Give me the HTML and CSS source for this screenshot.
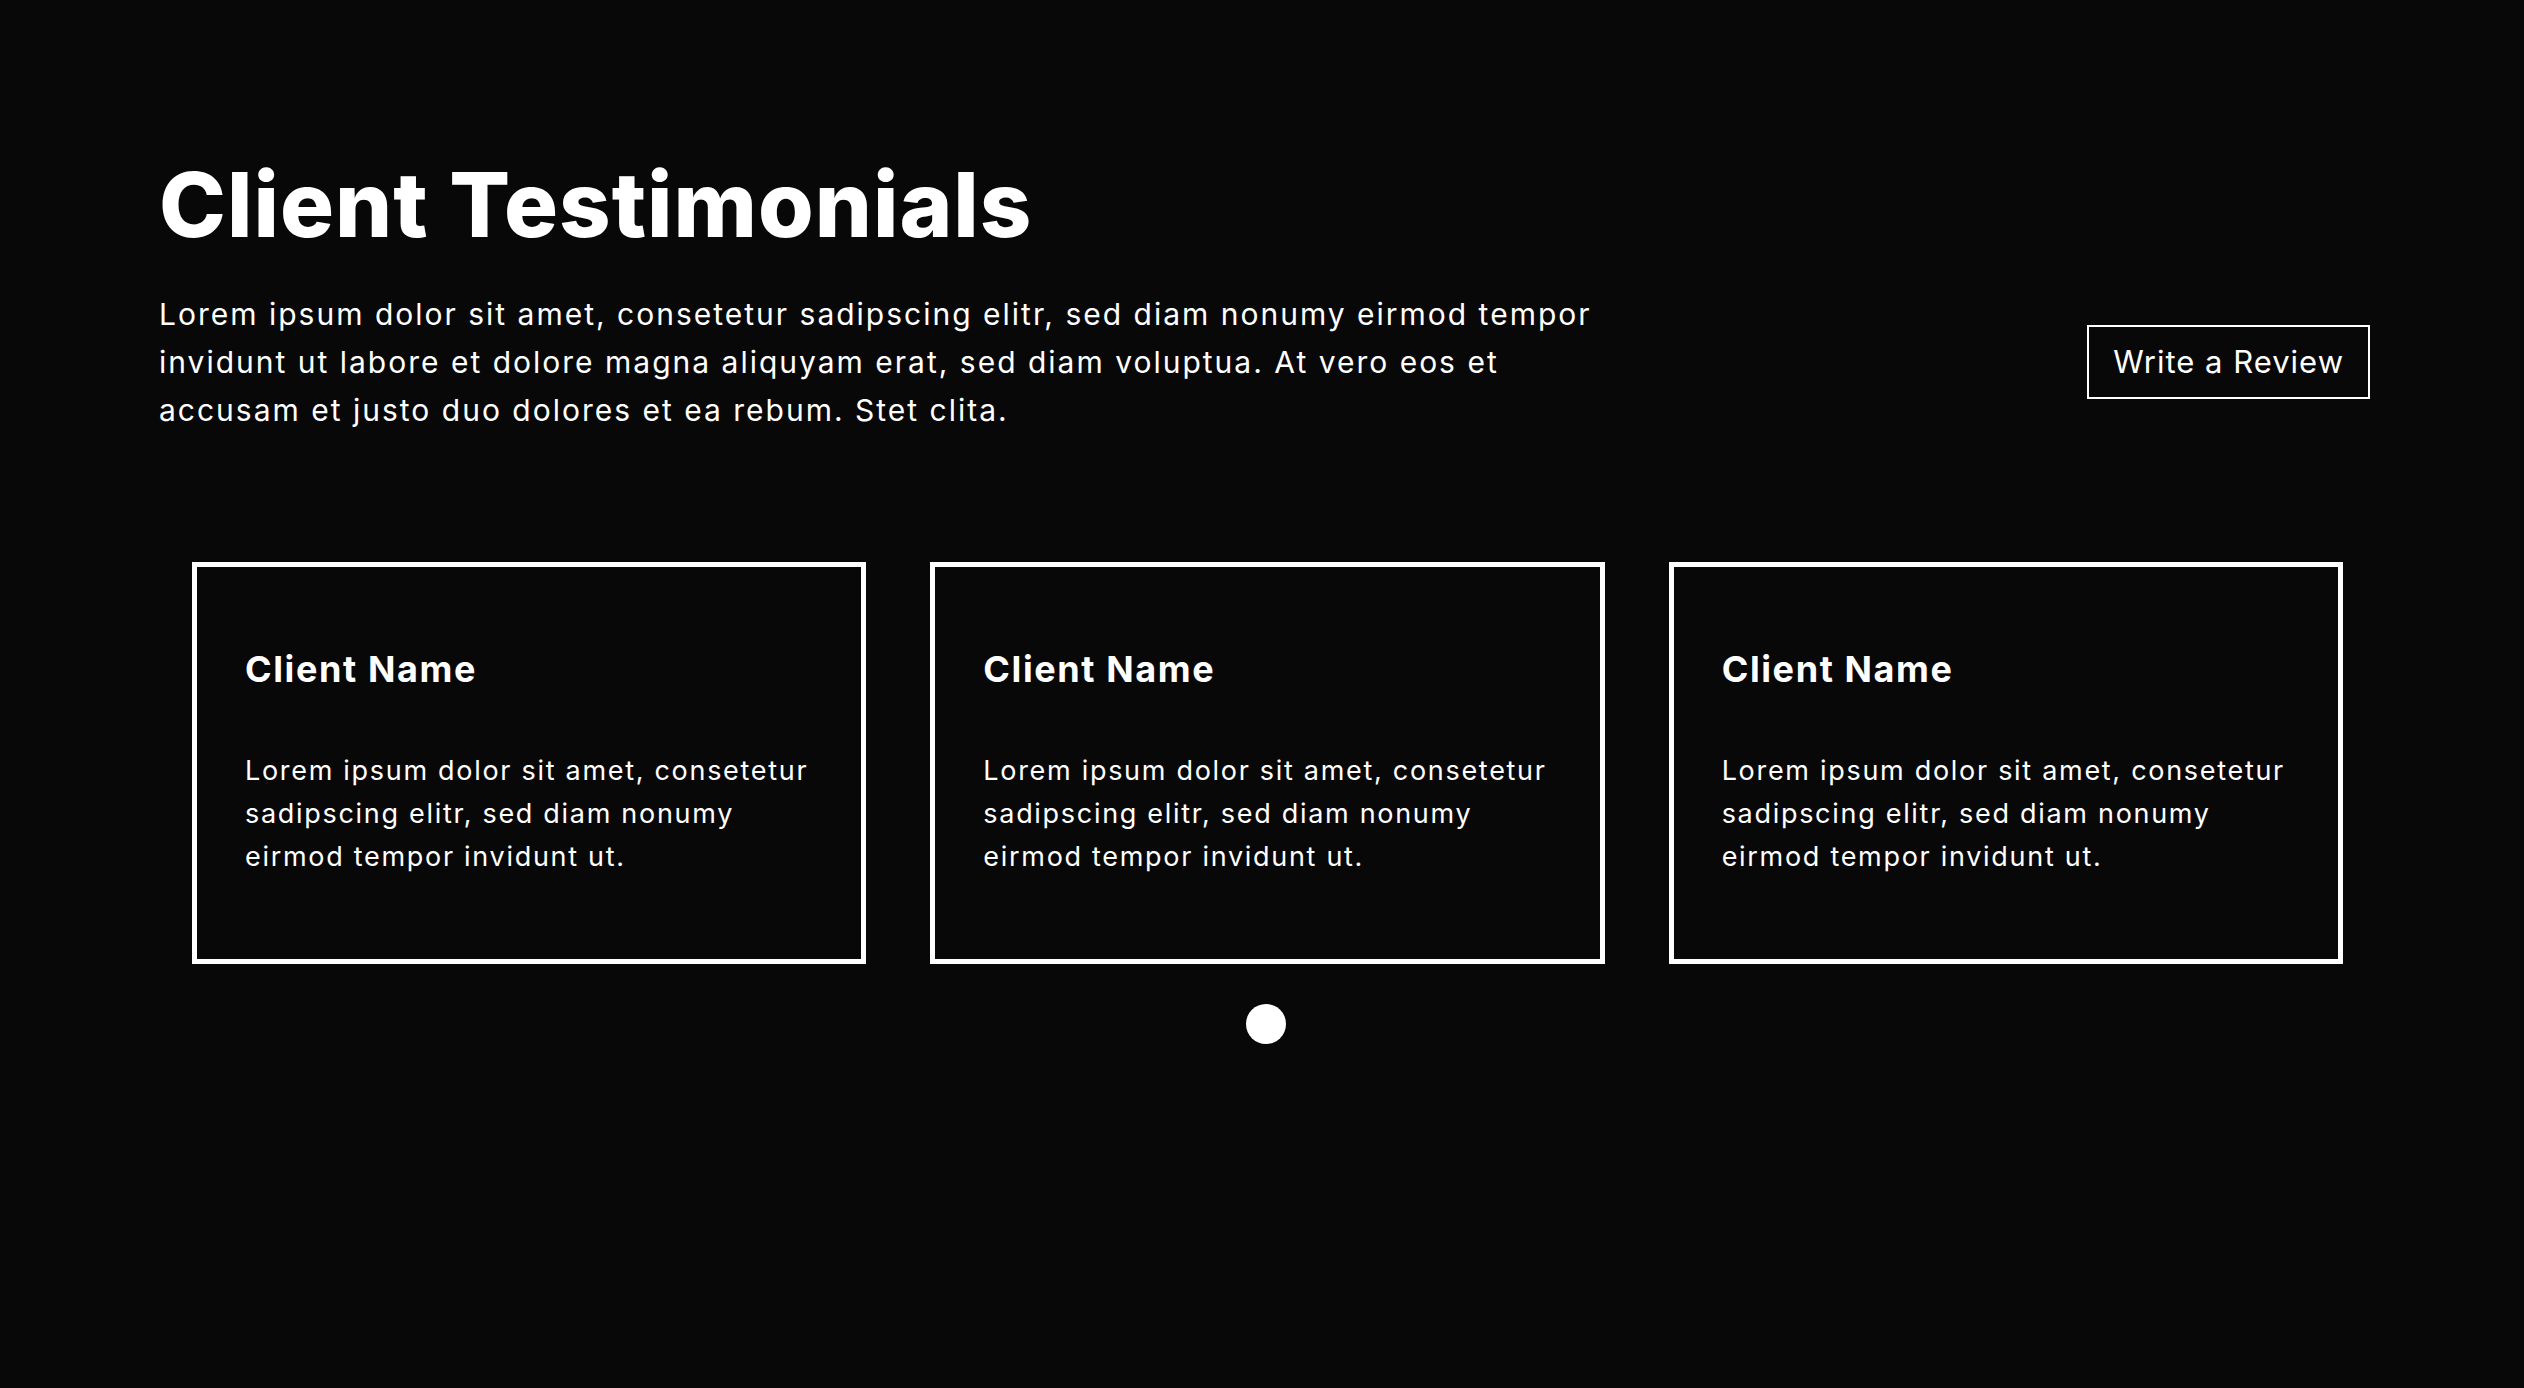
FILE: index.html
```html
<!DOCTYPE html>
<html lang="en">
<head>
<meta charset="utf-8">
<title>Client Testimonials</title>
<link rel="stylesheet" href="styles.css">
</head>
<body>
<section class="testimonials">
  <h1 class="title">Client Testimonials</h1>
  <div class="intro">
    <p class="intro-text">Lorem ipsum dolor sit amet, consetetur sadipscing elitr, sed diam nonumy eirmod tempor invidunt ut labore et dolore magna aliquyam erat, sed diam voluptua. At vero eos et accusam et justo duo dolores et ea rebum. Stet clita.</p>
    <a class="review-btn" href="#">Write a Review</a>
  </div>
  <div class="cards">
    <article class="card">
      <h3 class="card-name">Client Name</h3>
      <p class="card-text">Lorem ipsum dolor sit amet, consetetur sadipscing elitr, sed diam nonumy eirmod tempor invidunt ut.</p>
    </article>
    <article class="card">
      <h3 class="card-name">Client Name</h3>
      <p class="card-text">Lorem ipsum dolor sit amet, consetetur sadipscing elitr, sed diam nonumy eirmod tempor invidunt ut.</p>
    </article>
    <article class="card">
      <h3 class="card-name">Client Name</h3>
      <p class="card-text">Lorem ipsum dolor sit amet, consetetur sadipscing elitr, sed diam nonumy eirmod tempor invidunt ut.</p>
    </article>
  </div>
  <div class="dots"><span class="dot"></span></div>
</section>
</body>
</html>
```

FILE: styles.css
```css
html, body {
  margin: 0;
  padding: 0;
  background: #080808;
  color: #ffffff;
  font-family: Inter, "Open Sans", sans-serif;
}

.testimonials {
  padding: 150px 154px 0 159px;
  min-height: 1388px;
  box-sizing: border-box;
}

.title {
  margin: 0;
  font-size: 90px;
  line-height: 110px;
  font-weight: 800;
  letter-spacing: 1px;
}

.intro {
  display: flex;
  align-items: center;
  justify-content: space-between;
  margin-top: 30px;
}

.intro-text {
  margin: 0;
  max-width: 1480px;
  font-size: 30px;
  line-height: 48px;
  font-weight: 400;
  letter-spacing: 2px;
}

.review-btn {
  display: inline-block;
  border: 2px solid #ffffff;
  color: #ffffff;
  text-decoration: none;
  font-size: 31px;
  line-height: 70px;
  padding: 0 24px;
  letter-spacing: 1px;
  white-space: nowrap;
}

.cards {
  display: flex;
  gap: 64px;
  margin: 128px 27px 0 33px;
}

.card {
  flex: 1 1 0;
  border: 5px solid #ffffff;
  padding: 81px 44px 81px 48px;
}

.card-name {
  margin: 0 0 58px 0;
  font-size: 36px;
  line-height: 43px;
  font-weight: 700;
  letter-spacing: 1.6px;
}

.card-text {
  margin: 0;
  font-size: 27px;
  line-height: 43px;
  font-weight: 400;
  letter-spacing: 1.7px;
}

.dots {
  display: flex;
  justify-content: center;
  margin-top: 40px;
  padding-left: 2px;
}

.dot {
  width: 40px;
  height: 40px;
  border-radius: 50%;
  background: #ffffff;
}
```
